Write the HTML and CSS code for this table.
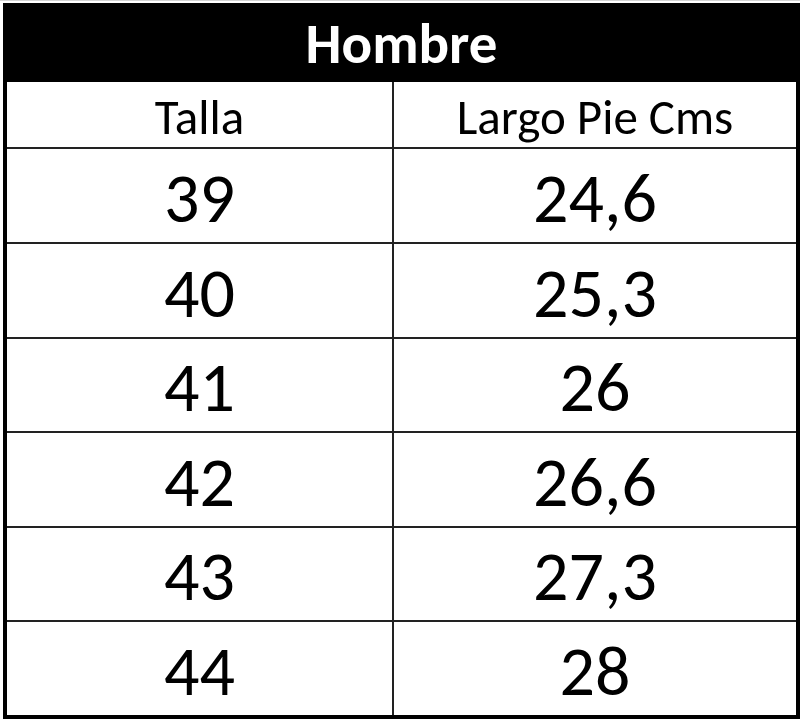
FILE: index.html
```html
<!DOCTYPE html>
<html lang="es">
<head>
<meta charset="utf-8">
<title>Hombre</title>
<link rel="stylesheet" href="styles.css">
</head>
<body>
<div class="page">
  <div class="sheet">
    <div class="title">Hombre</div>
    <div class="grid">
      <div class="cell head left">Talla</div>
      <div class="cell head">Largo Pie Cms</div>
      <div class="cell num left">39</div>
      <div class="cell num">24,6</div>
      <div class="cell num left">40</div>
      <div class="cell num">25,3</div>
      <div class="cell num left">41</div>
      <div class="cell num">26</div>
      <div class="cell num left">42</div>
      <div class="cell num">26,6</div>
      <div class="cell num left">43</div>
      <div class="cell num">27,3</div>
      <div class="cell num left last">44</div>
      <div class="cell num last">28</div>
    </div>
  </div>
</div>
</body>
</html>
```

FILE: styles.css
```css
html, body {
  margin: 0;
  padding: 0;
  background: #ffffff;
}

.page {
  border-top: 1px solid #d4d4d4;
  padding: 2px 0 0 3px;
  font-family: "Carlito", "Open Sans", "Liberation Sans", sans-serif;
  color: #000;
}

.sheet {
  width: 797px;
}

.title {
  height: 79px;
  background: #000;
  color: #fff;
  font-weight: 700;
  font-size: 57px;
  display: flex;
  align-items: center;
  justify-content: center;
  padding-top: 1px;
  box-sizing: border-box;
}

.grid {
  display: grid;
  grid-template-columns: 387px 1fr;
  grid-template-rows: 67px 95px 95px 94px 95px 94px 93px;
  border-left: 4px solid #000;
  border-right: 4px solid #000;
  border-bottom: 4px solid #000;
}

.cell {
  display: flex;
  align-items: center;
  justify-content: center;
  border-bottom: 2px solid #222;
  box-sizing: border-box;
}

.cell.left {
  border-right: 2px solid #222;
}

.cell.last {
  border-bottom: none;
}

.head {
  font-size: 49px;
  padding-top: 4px;
}

.num {
  font-size: 70px;
  padding-top: 4px;
}
```
